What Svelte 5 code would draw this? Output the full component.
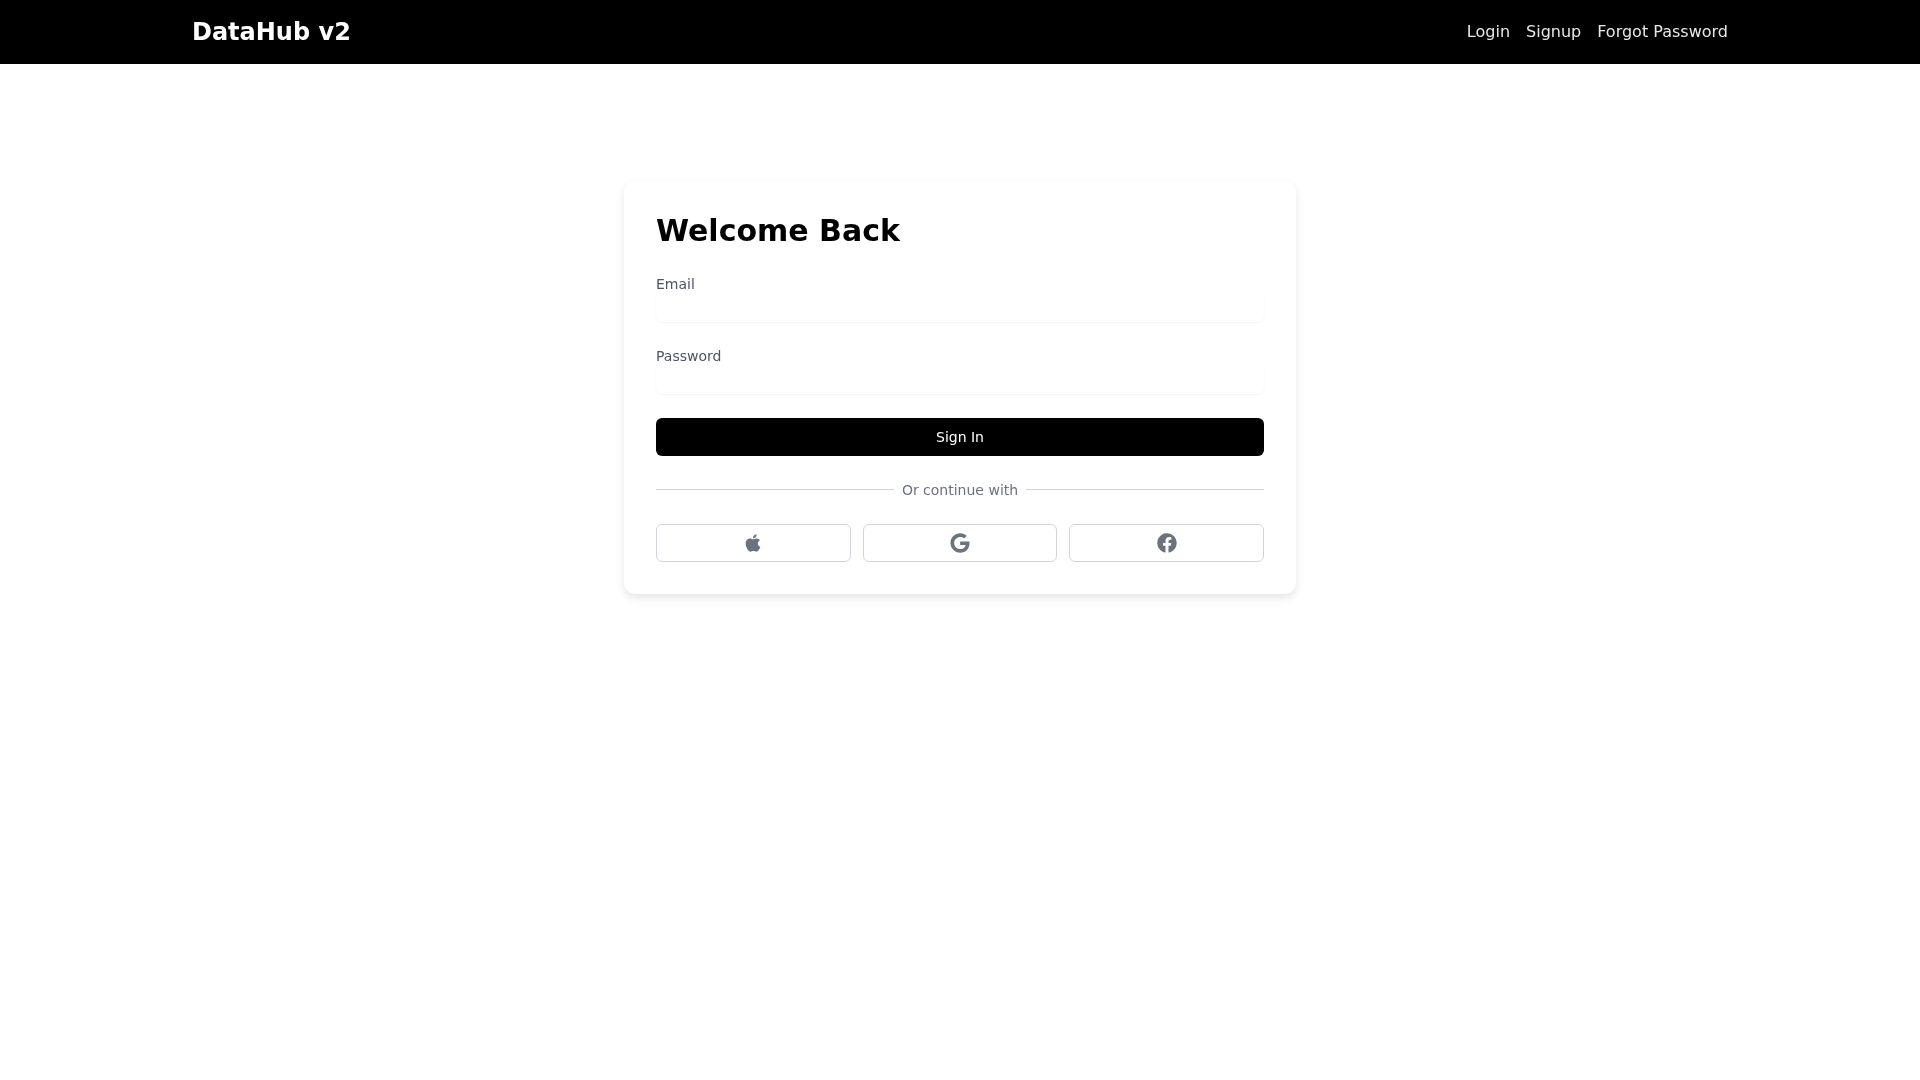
<script lang="ts">
  let email = $state('');
  let password = $state('');

  const socials = [
    {
      name: 'Apple',
      box: '0 0 384 512',
      d: 'M318.7 268.7c-.2-36.7 16.4-64.4 50-84.8-18.8-26.9-47.2-41.7-84.7-44.6-35.5-2.8-74.3 20.7-88.5 20.7-15 0-49.4-19.7-76.4-19.7C63.3 141.2 4 184.8 4 273.5q0 39.3 14.4 81.2c12.8 36.7 59 126.7 107.2 125.2 25.2-.6 43-17.9 75.8-17.9 31.8 0 48.3 17.9 76.4 17.9 48.6-.7 90.4-82.5 102.6-119.3-65.2-30.7-61.7-90-61.7-91.9zm-56.6-164.2c27.3-32.4 24.8-61.9 24-72.5-24.1 1.4-52 16.4-67.9 34.9-17.5 19.8-27.8 44.3-25.6 71.9 26.1 2 49.9-11.4 69.5-34.3z'
    },
    {
      name: 'Google',
      box: '0 0 488 512',
      d: 'M488 261.8C488 403.3 391.1 504 248 504 110.8 504 0 393.2 0 256S110.8 8 248 8c66.8 0 123 24.5 166.3 64.9l-67.5 64.9C258.5 52.6 94.3 116.6 94.3 256c0 86.5 69.1 156.6 153.7 156.6 98.2 0 135-70.4 140.8-106.9H248v-85.3h236.1c2.3 12.7 3.9 24.9 3.9 41.4z'
    },
    {
      name: 'Facebook',
      box: '0 0 512 512',
      d: 'M504 256C504 119 393 8 256 8S8 119 8 256c0 123.78 90.69 226.38 209.25 245V327.69h-63V256h63v-54.64c0-62.15 37-96.48 93.67-96.48 27.14 0 55.52 4.84 55.52 4.84v61h-31.28c-30.8 0-40.41 19.12-40.41 38.73V256h68.78l-11 71.69h-57.78V501C413.31 482.38 504 379.78 504 256z'
    }
  ];
</script>

<div class="shell">
  <nav class="navbar">
    <div class="nav-inner">
      <a class="brand" href="#home">DataHub v2</a>
      <div class="nav-links">
        <a href="#login">Login</a>
        <a href="#signup">Signup</a>
        <a href="#forgot">Forgot Password</a>
      </div>
    </div>
  </nav>

  <main class="page">
    <section class="card">
      <h1>Welcome Back</h1>
      <form onsubmit={(e) => e.preventDefault()}>
        <div class="field">
          <label for="email">Email</label>
          <input id="email" type="email" bind:value={email} />
        </div>
        <div class="field">
          <label for="password">Password</label>
          <input id="password" type="password" bind:value={password} />
        </div>
        <button class="submit" type="submit">Sign In</button>
      </form>
      <div class="divider"><span>Or continue with</span></div>
      <div class="socials">
        {#each socials as s}
          <button class="social" type="button" aria-label={s.name}>
            <svg viewBox={s.box} aria-hidden="true"><path d={s.d} /></svg>
          </button>
        {/each}
      </div>
    </section>
  </main>
</div>

<style>
  :global(body) {
    background: #fff;
    font-family: "DejaVu Sans", sans-serif;
    color: #000;
  }

  /* own layer, text gets greyscale antialiasing */
  .shell {
    min-height: 100vh;
    will-change: transform;
  }

  .navbar {
    background: #000;
    height: 64px;
  }

  .nav-inner {
    width: 1536px;
    height: 100%;
    margin: 0 auto;
    display: flex;
    align-items: center;
    justify-content: space-between;
  }

  .brand {
    color: #fff;
    font-size: 24px;
    font-weight: 700;
    text-decoration: none;
  }

  .nav-links {
    display: flex;
    gap: 16px;
    line-height: 24px;
  }

  .nav-links a {
    color: #e5e7eb;
    font-size: 16px;
    text-decoration: none;
  }

  .page {
    display: flex;
    justify-content: center;
    padding-top: 117px;
  }

  .card {
    box-sizing: border-box;
    width: 672px;
    padding: 32px;
    background: #fff;
    border-radius: 12px;
    box-shadow: 0 4px 8px rgba(0, 0, 0, 0.1);
  }

  h1 {
    margin: 0 0 25px;
    font-size: 30px;
    line-height: 36px;
    font-weight: 700;
  }

  .field {
    margin-bottom: 24px;
  }

  label {
    display: block;
    font-size: 14px;
    line-height: 20px;
    color: #4b5563;
  }

  input {
    display: block;
    box-sizing: border-box;
    width: 100%;
    height: 28px;
    padding: 0 12px;
    background: #fff;
    border: none;
    border-radius: 6px;
    box-shadow: 0 1px 2px rgba(0, 0, 0, 0.05);
    outline: none;
    font: inherit;
    font-size: 14px;
  }

  .submit {
    display: block;
    width: 100%;
    height: 38px;
    background: #000;
    color: #fff;
    border: none;
    border-radius: 6px;
    font-family: inherit;
    font-size: 14px;
  }

  .divider {
    display: flex;
    align-items: center;
    gap: 8px;
    margin-top: 24px;
    height: 20px;
    font-size: 14px;
    color: #6b7280;
  }

  .divider::before,
  .divider::after {
    content: '';
    flex: 1;
    margin-bottom: 1px;
    border-top: 1px solid #d1d5db;
  }

  .socials {
    display: grid;
    grid-template-columns: repeat(3, 1fr);
    gap: 12px;
    margin-top: 24px;
  }

  .social {
    display: flex;
    align-items: center;
    justify-content: center;
    height: 38px;
    padding: 0;
    background: #fff;
    border: 1px solid #d1d5db;
    border-radius: 6px;
  }

  .social svg {
    width: 20px;
    height: 20px;
    fill: #6b7280;
  }
</style>
